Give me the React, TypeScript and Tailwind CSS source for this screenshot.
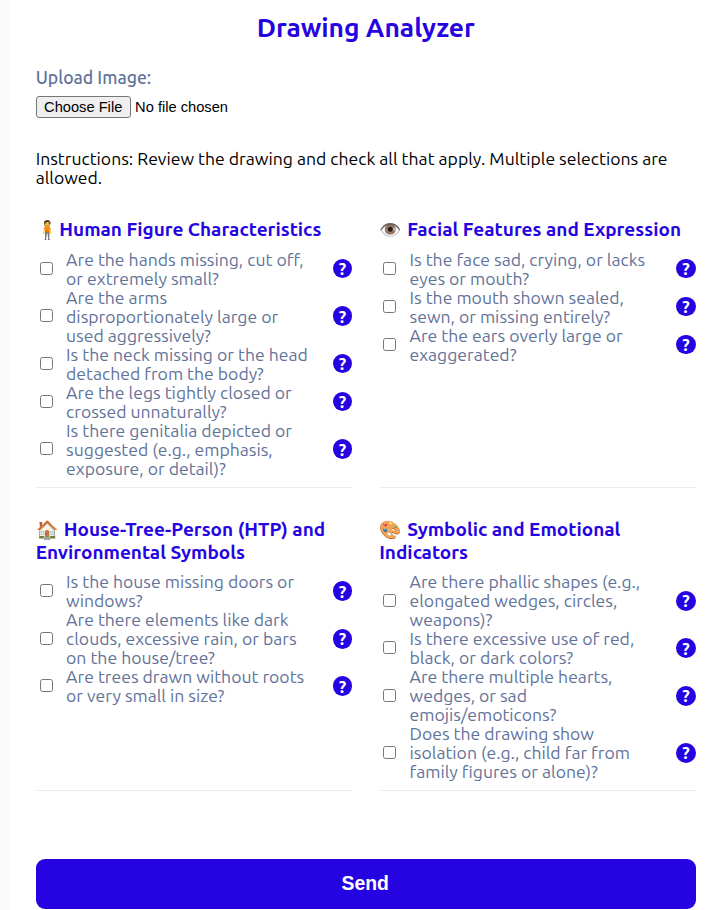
import React from "react";

type Section = { emoji: string; gap: string; title: string[]; items: string[][] };

const sections: Section[] = [
  {
    emoji: "🧍",
    gap: "w-[23.6px]",
    title: ["Human Figure Characteristics"],
    items: [
      ["Are the hands missing, cut off,", "or extremely small?"],
      ["Are the arms", "disproportionately large or", "used aggressively?"],
      ["Is the neck missing or the head", "detached from the body?"],
      ["Are the legs tightly closed or", "crossed unnaturally?"],
      ["Is there genitalia depicted or", "suggested (e.g., emphasis,", "exposure, or detail)?"],
    ],
  },
  {
    emoji: "👁️",
    gap: "w-[28px]",
    title: ["Facial Features and Expression"],
    items: [
      ["Is the face sad, crying, or lacks", "eyes or mouth?"],
      ["Is the mouth shown sealed,", "sewn, or missing entirely?"],
      ["Are the ears overly large or", "exaggerated?"],
    ],
  },
  {
    emoji: "🏠",
    gap: "w-[28px]",
    title: ["House-Tree-Person (HTP) and", "Environmental Symbols"],
    items: [
      ["Is the house missing doors or", "windows?"],
      ["Are there elements like dark", "clouds, excessive rain, or bars", "on the house/tree?"],
      ["Are trees drawn without roots", "or very small in size?"],
    ],
  },
  {
    emoji: "🎨",
    gap: "w-[28px]",
    title: ["Symbolic and Emotional", "Indicators"],
    items: [
      ["Are there phallic shapes (e.g.,", "elongated wedges, circles,", "weapons)?"],
      ["Is there excessive use of red,", "black, or dark colors?"],
      ["Are there multiple hearts,", "wedges, or sad", "emojis/emoticons?"],
      ["Does the drawing show", "isolation (e.g., child far from", "family figures or alone)?"],
    ],
  },
];

export default function App() {
  return (
    <div className="h-[910px] overflow-hidden bg-[#fafafa] pl-[9px] font-['Ubuntu','Noto_Sans',sans-serif]">
      <main className="h-full bg-white pl-[26.7px] pr-[26.2px] pt-[11px]">
        <h1 className="h-[32px] text-center text-[26.4px] font-semibold leading-[32px] text-[#2604e2]">Drawing Analyzer</h1>
        <label className="mt-[25px] block h-[20px] text-[17.6px] font-medium leading-[20px] text-[#62739a]">Upload Image:</label>
        <div className="mt-[8px] flex h-[22px] items-center font-['Liberation_Sans',Arial,sans-serif] text-[14.67px] text-black">
          <button className="h-[22px] w-[95px] whitespace-nowrap rounded-[3px] border border-[#767676] bg-[#efefef] leading-[20px]">Choose File</button>
          <span className="ml-[4.4px]">No file chosen</span>
        </div>
        <p className="mt-[31px] h-[38px] whitespace-nowrap text-[17.6px] leading-[19px] text-black">
          <span className="block">Instructions: Review the drawing and check all that apply. Multiple selections are</span>
          <span className="block">allowed.</span>
        </p>
        <div className="mt-[31px] grid grid-cols-2 gap-x-[26.8px] gap-y-[29.75px]">
          {sections.map((s) => (
            <section key={s.emoji} className="border-b border-[#eeeeee] pb-[9.2px]">
              <h2 className="mb-[8.6px] whitespace-nowrap text-[19px] font-semibold leading-[23px] text-[#2604e2]">
                {s.title.map((text, i) => (
                  <span key={text} className="flex h-[23px]">
                    {i === 0 && <span className={`${s.gap} shrink-0 pl-[0.4px] font-['Noto_Color_Emoji'] text-[18px]`}>{s.emoji}</span>}
                    <span>{text}</span>
                  </span>
                ))}
              </h2>
              {s.items.map((lines) => (
                <div key={lines[0]} className="flex items-center">
                  <input type="checkbox" className="mb-px ml-[4px] mr-[13.4px] size-[13px] shrink-0" />
                  <span className="flex-1 whitespace-nowrap text-[17.6px] leading-[19px] text-[#62739a]">
                    {lines.map((text) => (
                      <span key={text} className="block">{text}</span>
                    ))}
                  </span>
                  <span className="flex size-[19.8px] shrink-0 items-center justify-center rounded-full bg-[#2604e2] text-[17px] font-bold leading-none text-white">?</span>
                </div>
              ))}
            </section>
          ))}
        </div>
        <button className="mt-[68px] block h-[50px] w-full rounded-[9px] bg-[#2604e2] pb-[2px] pr-px font-['Liberation_Sans',Arial,sans-serif] text-[19.36px] font-bold text-white">Send</button>
      </main>
    </div>
  );
}
